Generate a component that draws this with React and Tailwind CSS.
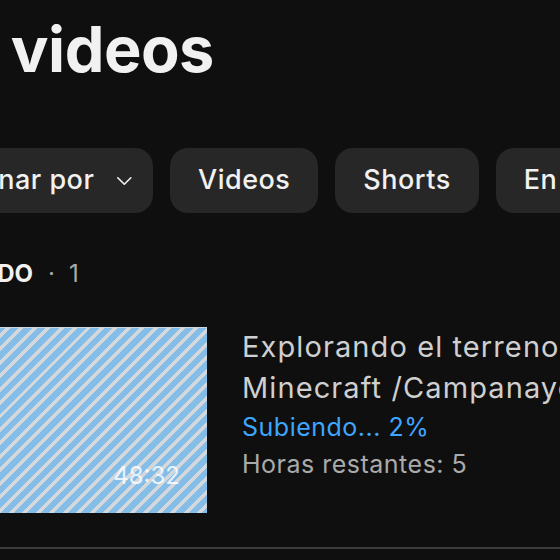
// App.jsx — cropped view of a "Tus videos" screen with an upload in progress.

import React from 'react';

const chips = ['Videos', 'Shorts', 'En vivo'];

export default function App() {
  return (
    <div className="w-[560px] h-[560px] overflow-hidden bg-[#0f0f0f] font-['Inter',sans-serif]">
      {/* Title */}
      <h1 className="pt-[18px] -ml-[114px] text-[63px] leading-[63px] font-bold text-[#f1f1f1] whitespace-nowrap tracking-[-0.5px]">
        Tus videos
      </h1>

      {/* Filter chips */}
      <div className="mt-[67px] -ml-[67px] flex gap-[17px] whitespace-nowrap">
        <div className="w-[220px] shrink-0 h-[65px] rounded-[18px] bg-[#272727] flex items-center justify-end pr-[21px] gap-[23px]">
          <span className="text-[27px] tracking-[0.5px] font-medium text-[#f1f1f1]">Ordenar por</span>
          <svg width="18" height="10" viewBox="0 0 18 10" fill="none">
            <path d="M1 1l8 8 8-8" stroke="#f1f1f1" strokeWidth="2" strokeLinecap="round" strokeLinejoin="round" />
          </svg>
        </div>
        {chips.map((c) => (
          <div
            key={c}
            className="shrink-0 h-[65px] rounded-[18px] bg-[#272727] flex items-center px-[28px] text-[27px] tracking-[0.5px] font-medium text-[#f1f1f1]"
          >
            {c}
          </div>
        ))}
      </div>

      {/* Section header */}
      <div className="mt-[45px] -ml-[127px] flex items-baseline text-[24px] leading-[32px] whitespace-nowrap">
        <span className="w-[160px] text-right font-bold text-[#f1f1f1]">SUBIENDO</span>
        <span className="ml-[15px] text-[#aaaaaa]">·</span>
        <span className="ml-[14px] text-[#aaaaaa]">1</span>
      </div>

      {/* Uploading video row */}
      <div className="mt-[37px] -ml-[124px] flex gap-[35px]">
        <div className="relative w-[331px] h-[186px] shrink-0 border-t border-[#cfd6dc] bg-[repeating-linear-gradient(135deg,#85bde9_0px,#85bde9_6px,#d5d8da_6px,#d5d8da_9.5px)]">
          <span className="absolute right-[27px] bottom-[25px] text-[24px] leading-none text-white/80">
            48:32
          </span>
        </div>
        <div className="-mt-[1px] whitespace-nowrap">
          <p className="text-[29px] leading-[41px] tracking-[1.1px] text-[#cfcfcf]">Explorando el terreno de</p>
          <p className="text-[29px] leading-[41px] tracking-[1.1px] text-[#cfcfcf]">Minecraft /Campanayork</p>
          <p className="text-[25px] leading-[38px] tracking-[0.5px] text-[#3ea6ff]">Subiendo... 2%</p>
          <p className="text-[25px] leading-[37px] tracking-[0.5px] text-[#aaaaaa]">Horas restantes: 5</p>
        </div>
      </div>

      {/* Divider */}
      <div className="mt-[34px] h-[2px] bg-[#3d3d3d]" />
    </div>
  );
}
